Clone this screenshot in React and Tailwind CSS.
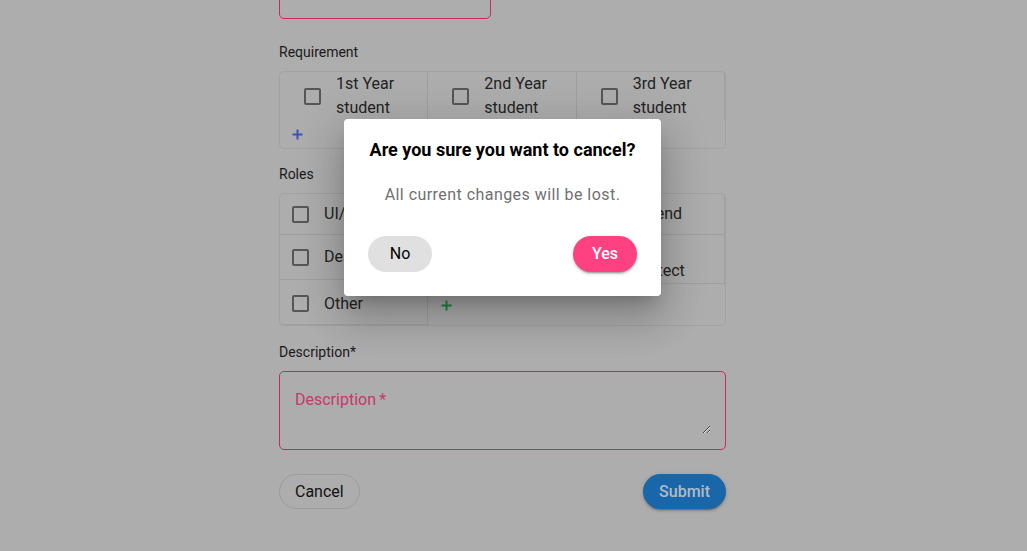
import React from "react";

function Box() {
  return <span className="block shrink-0 w-[17px] h-[17px] border-2 border-[#565656] rounded-[2px]" />;
}

function Plus({ color }) {
  return (
    <svg width="11" height="11" viewBox="0 0 11 11" className="block shrink-0">
      <path d="M5.5 0.5V10.5M0.5 5.5H10.5" stroke={color} strokeWidth="2" />
    </svg>
  );
}

function RoleCell({ label, h, extra = "" }) {
  return (
    <div className={`${h} ${extra} flex items-center pl-3 pr-2 border-r border-b border-[#9f9f9f]`}>
      <Box />
      <span className="ml-[15px] text-base leading-6 text-[#232323]">{label}</span>
    </div>
  );
}

export default function App() {
  return (
    <div className="relative min-h-screen h-[551px] overflow-hidden bg-[#adadad] font-['Roboto','Liberation_Sans',sans-serif]">
      <div className="flex justify-center pr-[22px]">
        <div className="w-[447px] flex flex-col">
          {/* top input (scrolled off) */}
          <div className="mt-[-37px] h-[56px] w-[212px] border border-[#c62a5e] rounded-[5px]" />

          {/* Requirement */}
          <div className="mt-[23px] text-sm leading-5 text-[#1a1a1a]">Requirement</div>
          <div className="mt-[9px] border border-[#a2a2a2] rounded-[5px] flex flex-col">
            <div className="flex">
              {["1st Year student", "2nd Year student", "3rd Year student"].map((l) => (
                <div key={l} className="flex-1 min-w-0 h-[48px] flex items-center pl-[24px] pr-2 border-r border-[#9f9f9f]">
                  <Box />
                  <span className="ml-[15px] text-base leading-6 text-[#232323]">{l}</span>
                </div>
              ))}
            </div>
            <div className="h-[28px] flex items-center pl-[12px]">
              <Plus color="#3c52b4" />
            </div>
          </div>

          {/* Roles */}
          <div className="mt-[15px] text-sm leading-5 text-[#1a1a1a]">Roles</div>
          <div className="mt-[9px] h-[133px] border border-[#a2a2a2] rounded-[5px] flex">
            <div className="flex-1 min-w-0 flex flex-col">
              <RoleCell label="UI/UX" h="h-[41px]" />
              <RoleCell label="Designer" h="h-[45px]" />
              <RoleCell label="Other" h="h-[45px]" extra="pt-[3px]" />
            </div>
            <div className="flex-1 min-w-0 flex flex-col">
              <RoleCell label="Frontend" h="h-[41px]" />
              <RoleCell label="Developer" h="h-[45px]" />
              <div className="pl-[13px] pt-[20px]">
                <Plus color="#23893f" />
              </div>
            </div>
            <div className="flex-1 min-w-0 flex flex-col">
              <RoleCell label="Backend" h="h-[41px]" />
              <RoleCell label="Tech Architect" h="h-[49px]" />
            </div>
          </div>

          {/* Description */}
          <div className="mt-[16px] text-sm leading-5 text-[#1a1a1a]">Description*</div>
          <div className="mt-[9px] border border-[#c62a5e] rounded-[5px] pt-[16px] pb-[15px] pl-[15px] pr-[14px]">
            <textarea
              className="block w-full h-[46px] bg-transparent outline-none text-base leading-6 text-[#222] placeholder:text-[#c43a68] resize-y"
              placeholder={"Description\u2009*"}
            />
          </div>

          {/* Buttons */}
          <div className="mt-[24px] flex justify-between">
            <button className="h-[35px] px-[15px] border border-[#9b9b9b] rounded-full text-base text-[#121212]">
              Cancel
            </button>
            <button className="h-[35px] px-4 rounded-full bg-[#1966a8] text-base font-medium text-[#b0bac5] shadow-[0px_3px_1px_-2px_rgba(0,0,0,0.2),0px_2px_2px_0px_rgba(0,0,0,0.14),0px_1px_5px_0px_rgba(0,0,0,0.12)]">
              Submit
            </button>
          </div>
        </div>
      </div>

      {/* Dialog */}
      <div className="absolute inset-0 flex justify-center items-start pt-[119px] pr-[22px]">
        <div className="w-[317px] bg-white rounded-[4px] pt-[17px] px-6 pb-6 flex flex-col items-center shadow-[0px_11px_15px_-7px_rgba(0,0,0,0.2),0px_24px_38px_3px_rgba(0,0,0,0.14),0px_9px_46px_8px_rgba(0,0,0,0.12)]">
          <div className="text-[18px] font-bold leading-7 text-black whitespace-nowrap">
            Are you sure you want to cancel?
          </div>
          <div className="mt-[19px] text-base leading-6 tracking-[0.45px] text-[#707070] whitespace-nowrap">
            All current changes will be lost.
          </div>
          <div className="mt-[29px] w-full flex justify-between">
            <button className="w-16 h-9 rounded-full bg-[#e0e0e0] text-base text-black">No</button>
            <button className="w-16 h-9 rounded-full bg-[#ff4081] text-base font-medium text-white shadow-[0px_3px_1px_-2px_rgba(0,0,0,0.2),0px_2px_2px_0px_rgba(0,0,0,0.14),0px_1px_5px_0px_rgba(0,0,0,0.12)]">
              Yes
            </button>
          </div>
        </div>
      </div>
    </div>
  );
}
